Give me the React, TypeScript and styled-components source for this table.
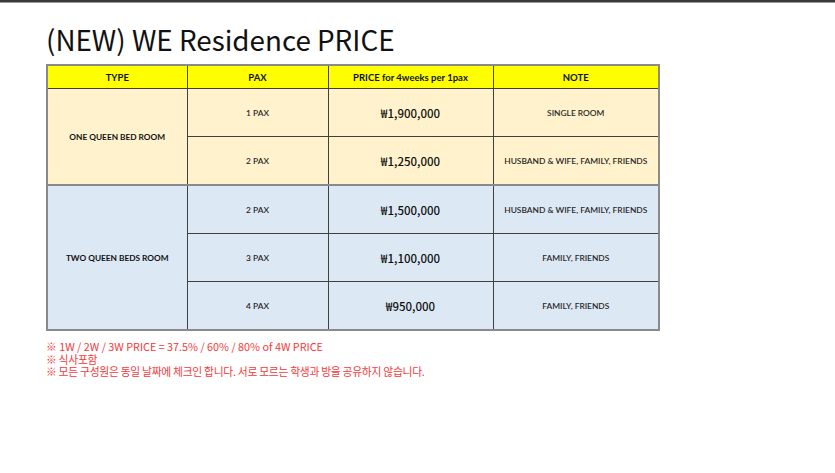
import React from "react";
import styled, { createGlobalStyle } from "styled-components";

const Global = createGlobalStyle`
  html, body { margin: 0; padding: 0; background: #ffffff; }
  body { width: 835px; height: 473px; overflow: hidden; }
`;

const Page = styled.div`
  width: 835px;
  height: 473px;
  box-sizing: border-box;
  border-top: 2px solid #3a3a3a;
  box-shadow: inset 0 1px 0 #9a9a9a;
  padding: 19px 0 0 46px;
  font-family: "Noto Sans CJK KR", "Noto Sans", sans-serif;
`;

const Title = styled.h1`
  margin: 0;
  font-family: "Noto Sans CJK KR", "Noto Sans", sans-serif;
  font-weight: 400;
  font-size: 27.8px;
  line-height: 36px;
  color: #111;
  letter-spacing: 0;
`;

const Table = styled.table`
  margin-top: 7px;
  border-collapse: collapse;
  table-layout: fixed;
  width: 612px;
  border: 2px solid #8a8a8a;
`;

const HeadCell = styled.th`
  background: #ffff00;
  height: 22px;
  padding: 0;
  border: 1px solid #404040;
  border-top: 2px solid #8a8a8a;
  font-family: Lato, "Noto Sans", sans-serif;
  font-weight: 700;
  font-size: 9.5px;
  color: #111;
  text-align: center;
  vertical-align: middle;
`;

const Row = styled.tr<{ $tone: "beige" | "blue"; $groupStart?: boolean }>`
  background: ${(p) => (p.$tone === "beige" ? "#fff2cc" : "#dde8f5")};
  & > td {
    ${(p) => (p.$groupStart ? "border-top: 2px solid #8a8a8a;" : "")}
  }
`;

const Cell = styled.td<{ $kind: "type" | "pax" | "price" | "note" }>`
  height: 47px;
  padding: 0;
  border: 1px solid #404040;
  text-align: center;
  vertical-align: middle;
  color: ${(p) => (p.$kind === "type" || p.$kind === "price" ? "#111" : "#2a2a2a")};
  font-family: ${(p) =>
    p.$kind === "price"
      ? `"Noto Sans CJK KR", "Noto Sans", sans-serif`
      : `Lato, "Noto Sans", sans-serif`};
  font-weight: ${(p) => (p.$kind === "type" ? 700 : p.$kind === "price" ? 500 : 600)};
  font-size: ${(p) => (p.$kind === "price" ? "11.5px" : p.$kind === "type" ? "8.3px" : "8.4px")};
`;

const Notes = styled.div`
  margin-top: 9px;
  font-family: "Noto Sans CJK KR", "Noto Sans", sans-serif;
  font-size: 10.8px;
  line-height: 12.5px;
  color: #f43a3a;
`;

const NoteLine = styled.div<{ $korean?: boolean }>`
  letter-spacing: ${(p) => (p.$korean ? "-0.3px" : "0")};
`;

type Entry = { pax: string; price: string; note: string };
const groups: { type: string; tone: "beige" | "blue"; rows: Entry[] }[] = [
  {
    type: "ONE QUEEN BED ROOM",
    tone: "beige",
    rows: [
      { pax: "1 PAX", price: "₩1,900,000", note: "SINGLE ROOM" },
      { pax: "2 PAX", price: "₩1,250,000", note: "HUSBAND & WIFE, FAMILY, FRIENDS" },
    ],
  },
  {
    type: "TWO QUEEN BEDS ROOM",
    tone: "blue",
    rows: [
      { pax: "2 PAX", price: "₩1,500,000", note: "HUSBAND & WIFE, FAMILY, FRIENDS" },
      { pax: "3 PAX", price: "₩1,100,000", note: "FAMILY, FRIENDS" },
      { pax: "4 PAX", price: "₩950,000", note: "FAMILY, FRIENDS" },
    ],
  },
];

export default function App() {
  return (
    <>
      <Global />
      <Page>
        <Title>(NEW) WE Residence PRICE</Title>
        <Table>
          <colgroup>
            <col style={{ width: 140 }} />
            <col style={{ width: 141 }} />
            <col style={{ width: 165 }} />
            <col style={{ width: 166 }} />
          </colgroup>
          <thead>
            <tr>
              <HeadCell>TYPE</HeadCell>
              <HeadCell>PAX</HeadCell>
              <HeadCell>PRICE for 4weeks per 1pax</HeadCell>
              <HeadCell>NOTE</HeadCell>
            </tr>
          </thead>
          <tbody>
            {groups.map((g, gi) =>
              g.rows.map((r, ri) => (
                <Row key={`${gi}-${ri}`} $tone={g.tone} $groupStart={ri === 0 && gi > 0}>
                  {ri === 0 && (
                    <Cell $kind="type" rowSpan={g.rows.length}>
                      {g.type}
                    </Cell>
                  )}
                  <Cell $kind="pax">{r.pax}</Cell>
                  <Cell $kind="price">{r.price}</Cell>
                  <Cell $kind="note">{r.note}</Cell>
                </Row>
              ))
            )}
          </tbody>
        </Table>
        <Notes>
          <NoteLine>※ 1W / 2W / 3W PRICE = 37.5% / 60% / 80% of 4W PRICE</NoteLine>
          <NoteLine $korean>※ 식사포함</NoteLine>
          <NoteLine $korean>※ 모든 구성원은 동일 날짜에 체크인 합니다. 서로 모르는 학생과 방을 공유하지 않습니다.</NoteLine>
        </Notes>
      </Page>
    </>
  );
}
